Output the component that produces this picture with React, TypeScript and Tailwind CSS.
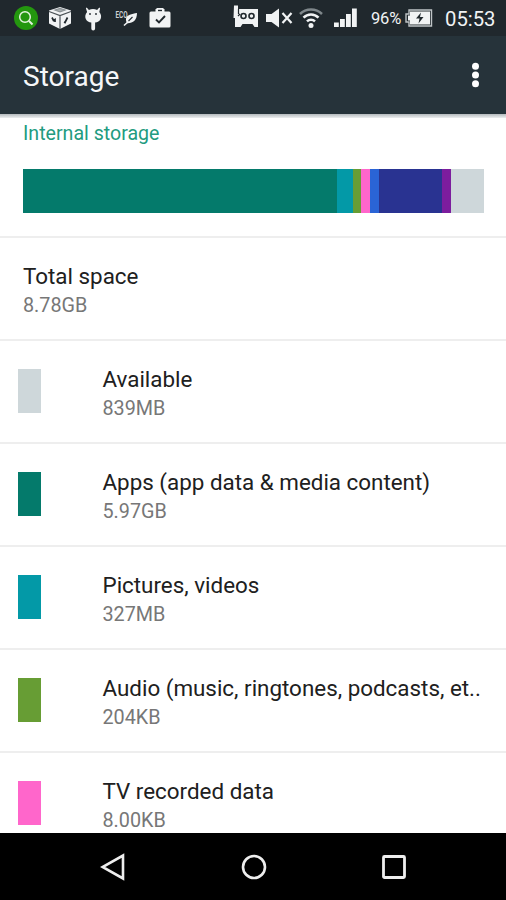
import clsx from "clsx";

const segments = [
  { name: "apps", className: "w-[314px] bg-[#047a6b]" },
  { name: "pictures", className: "w-[16px] bg-[#0399a7]" },
  { name: "audio", className: "w-[8px] bg-[#679d34]" },
  { name: "tv", className: "w-[9px] bg-[#ff66cb]" },
  { name: "downloads", className: "w-[9px] bg-[#2a64d6]" },
  { name: "cached", className: "w-[63px] bg-[#293391]" },
  { name: "other", className: "w-[9px] bg-[#7c1d9e]" },
  { name: "available", className: "w-[33px] bg-[#ced7da]" },
];

const rows = [
  { title: "Available", size: "839MB", color: "bg-[#ced7da]" },
  { title: "Apps (app data & media content)", size: "5.97GB", color: "bg-[#047a6b]" },
  { title: "Pictures, videos", size: "327MB", color: "bg-[#0399a7]" },
  { title: "Audio (music, ringtones, podcasts, et..", size: "204KB", color: "bg-[#679d34]" },
  { title: "TV recorded data", size: "8.00KB", color: "bg-[#ff66cb]" },
];

function StatusBar() {
  return (
    <div className="flex h-9 shrink-0 items-center bg-[#20282d] pl-[14px] text-[#f1f3f4]">
      {/* Search */}
      <svg width="24" height="36" viewBox="0 0 24 36" fill="none">
        <circle cx="12" cy="18" r="12" fill="#24970f" />
        <circle cx="11" cy="17" r="5.3" stroke="#e5f3df" strokeWidth="1.5" />
        <path d="M15 21l3.5 3.5" stroke="#e5f3df" strokeWidth="2" />
      </svg>
      {/* Cube */}
      <svg className="ml-[10px]" width="24" height="36" viewBox="0 0 24 36" fill="none">
        <path d="M12 7l11 3.5v13L12 29 1 23.500v-13z" fill="#f1f3f4" />
        <path d="M7 10l5-1.600 5 1.600-5 1.900z" fill="#a9afb1" stroke="#8b9295" strokeWidth="1.300" />
        <path d="M1 11.500l11 4 11-4M12 15.500V29" stroke="#4a5155" strokeWidth="1.200" />
        <path d="M4 17.500l1.500 3 1.500-1v2.500M16 22l1 .5 2.500-5" stroke="#20282d" strokeWidth="1.700" />
      </svg>
      {/* Robot head */}
      <svg className="ml-[12px]" width="18" height="36" viewBox="0 0 18 36">
        <path d="M2.700 7.500l2.200 2.500a9 9 0 0 1 8.200 0l2.200-2.500.8.700-.8 3.800c1.900 2 2.300 4.900 1.300 7-1 2.200-3.100 3.200-5.500 3.600V28.500a1.900 1.900 0 0 1-3.800 0V22.600c-2.400-.4-4.500-1.400-5.500-3.600-1-2.100-.6-5 1.300-7L1.900 8.200z" fill="#f1f3f4" />
        <circle cx="6" cy="14" r=".9" fill="#20282d" />
        <circle cx="12" cy="14" r=".9" fill="#20282d" />
      </svg>
      {/* Eco leaf */}
      <svg className="ml-[13px]" width="24" height="36" viewBox="0 0 24 36" fill="none">
        <text x="0.500" y="17.500" fontSize="8.500" fontFamily="Roboto, sans-serif" fontWeight="700" textLength="12" lengthAdjust="spacingAndGlyphs" fill="#cdd1d3">ECO</text>
        <path d="M22 13c-5 1-10.500 1.500-11 6-.1 1.500.3 3 1 4.200 6 .3 10-3.200 10-10.200z" fill="#f1f3f4" />
        <path d="M9 25.500l5-4.500" stroke="#f1f3f4" strokeWidth="1.600" />
        <path d="M13.500 21l4-4" stroke="#20282d" strokeWidth="1.100" />
      </svg>
      {/* Work bag */}
      <svg className="ml-[10px]" width="22" height="36" viewBox="0 0 22 36" fill="none">
        <path d="M6.500 12V9.500l1.500-1.500h6l1.500 1.500V12z" fill="#f1f3f4" />
        <rect x="9" y="9.800" width="4" height="1.500" fill="#20282d" />
        <rect x="0.500" y="11.500" width="21" height="16" rx="1.500" fill="#f1f3f4" />
        <path d="M7 19.500l3 3 6-6.500" stroke="#20282d" strokeWidth="1.900" />
      </svg>

      {/* Cassette */}
      <svg className="ml-[62px]" width="26" height="36" viewBox="0 0 26 36" fill="none">
        <path d="M1 5.500h4V9h20v18h-3.500l-2-3h-10l-2 3H2V18H.5z" fill="#f1f3f4" />
        <circle cx="10.500" cy="16" r="2.500" stroke="#20282d" strokeWidth="1.600" />
        <circle cx="18.500" cy="16" r="2.500" stroke="#20282d" strokeWidth="1.600" />
        <path d="M5.500 9v5M5 16l2-2" stroke="#20282d" strokeWidth="1.200" />
      </svg>
      {/* Muted speaker */}
      <svg className="ml-[7px]" width="27" height="36" viewBox="0 0 27 36" fill="none">
        <path d="M0 14h5.500L13 8.500v19L5.500 22H0z" fill="#f1f3f4" />
        <path d="M16.500 13l9 10M25.500 13l-9 10" stroke="#f1f3f4" strokeWidth="2.200" />
      </svg>
      {/* Wifi */}
      <svg className="ml-[6px]" width="24" height="36" viewBox="0 0 24 36" fill="none" strokeWidth="2.500">
        <path d="M1 14a15.500 15.500 0 0 1 22 0" stroke="#7f878b" />
        <path d="M4.500 17.700a10.500 10.500 0 0 1 15 0M8 21.400a5.700 5.700 0 0 1 8 0" stroke="#f1f3f4" />
        <circle cx="12" cy="25.500" r="2.500" fill="#f1f3f4" />
      </svg>
      {/* Signal */}
      <svg className="ml-[11px]" width="23" height="36" viewBox="0 0 23 36" fill="#f1f3f4">
        <path d="M0 22.500h4.800V27H0zM6 19h4.800v8H6zM12 14h4.800v13H12zM18 8.500h4.800V27H18z" />
      </svg>

      <span className="ml-[14px] w-[34px] whitespace-nowrap pt-[3px] text-[16.500px] tracking-[-0.200px]">96%</span>
      {/* Battery, charging */}
      <svg width="28" height="36" viewBox="0 0 28 36" fill="none">
        <path d="M4 10h22.500v16H4v-4H1v-8h3z" stroke="#bfc4c6" strokeWidth="1.400" />
        <path d="M5 11.500h20v13H5v-4H3v-5h2z" fill="#f1f3f4" />
        <path d="M16 12.500l-5 6h3.500l-1 5 5-6.500h-3.500z" fill="#20282d" />
      </svg>
      <span className="ml-[12px] pt-[2px] text-[20.300px]">05:53</span>
    </div>
  );
}

function StorageRow({ title, size, color }: { title: string; size: string; color: string }) {
  return (
    <div className="flex h-[103px] shrink-0 items-start border-t-2 border-[#eeeeee] pl-[18px]">
      <div className={clsx("mt-[28px] h-[44px] w-[23px]", color)} />
      <div className="ml-[61.500px] pt-[24px]">
        <p className="whitespace-nowrap text-[22.400px] leading-[28px] text-[#202020]">{title}</p>
        <p className="mt-[2px] text-[19.800px] leading-[28px] text-[#777777]">{size}</p>
      </div>
    </div>
  );
}

function App() {
  return (
    <div className="flex h-[900px] w-[506px] flex-col overflow-hidden bg-white font-[Roboto,sans-serif]">
      <StatusBar />
      <header className="flex h-[78px] shrink-0 items-center justify-between bg-[#26333a] pl-[23px] pr-[26px]">
        <h1 className="pt-[4px] text-[28px] text-[#f5f7f8]">Storage</h1>
        <svg width="9" height="26" viewBox="0 0 9 26" fill="#ffffff">
          <circle cx="4.500" cy="4.300" r="3.500" />
          <circle cx="4.500" cy="13" r="3.500" />
          <circle cx="4.500" cy="21.700" r="3.500" />
        </svg>
      </header>

      <main className="flex h-[719px] shrink-0 flex-col overflow-hidden">
        <div className="h-[4px] shrink-0 bg-linear-to-b from-[#b5babd] to-[#eceff0]" />
        <section className="h-[118px] shrink-0 px-[23px]">
          <h2 className="pt-[3px] text-[19.600px] leading-[26px] text-[#229b80]">Internal storage</h2>
          <div className="mt-[22px] flex h-[44px] w-[461px]">
            {segments.map((segment) => (
              <div key={segment.name} className={segment.className} />
            ))}
          </div>
        </section>

        <div className="h-[103px] shrink-0 border-t-2 border-[#eeeeee] pl-[23px] pt-[24px]">
          <p className="text-[22.400px] leading-[28px] text-[#202020]">Total space</p>
          <p className="mt-[2px] text-[19.800px] leading-[28px] text-[#777777]">8.78GB</p>
        </div>
        {rows.map((row) => (
          <StorageRow key={row.title} {...row} />
        ))}
      </main>

      <nav className="flex grow items-center justify-between bg-black pl-[100px] pr-[99px]">
        <svg width="26" height="30" viewBox="0 0 26 30" fill="none">
          <path d="M23 3.500v23L2.500 15z" stroke="#eeeeee" strokeWidth="2.600" />
        </svg>
        <svg width="26" height="30" viewBox="0 0 26 30" fill="none">
          <circle cx="13" cy="15" r="11" stroke="#eeeeee" strokeWidth="2.600" />
        </svg>
        <svg width="26" height="30" viewBox="0 0 26 30" fill="none">
          <rect x="2.500" y="4.500" width="21" height="21" rx="1" stroke="#eeeeee" strokeWidth="2.800" />
        </svg>
      </nav>
    </div>
  );
}

export default App;
